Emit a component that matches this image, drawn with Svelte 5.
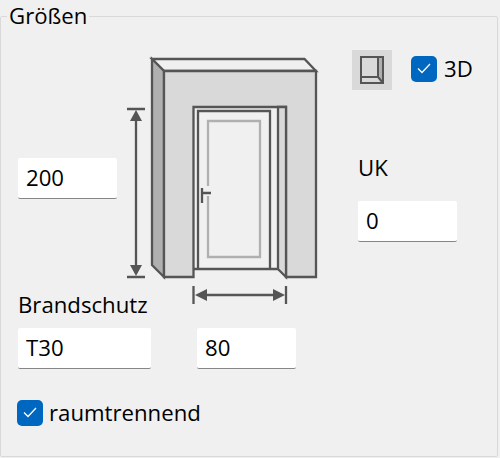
<script>
    let height = "200";
    let uk = "0";
    let fire = "T30";
    let width = "80";
    let is3d = true;
    let separating = true;
</script>

<div class="groupbox">
    <div class="legend">Größen</div>

    <div class="top">
        <div class="height-col">
            <input class="field w100" bind:value={height} />
        </div>

        <svg class="door" width="170" height="248" viewBox="150 57 170 248" fill="none" stroke="#555" stroke-width="2.300">
            <path d="M127 109H145M127 277H145M136 119V267" />
            <path d="M136 110L142 121H130ZM136 276L142 265H130Z" fill="#555" stroke="none" />
            <path d="M152 59H304.500L316 71H164Z" fill="#f0f0f0" />
            <path d="M152 59L164 71V277L152 265Z" fill="#b0b0b0" />
            <path d="M164 71H316V277H286V107H193.500V277H164Z" fill="#d9d9d9" />
            <path d="M278 107H286V277L278 269Z" fill="#d9d9d9" />
            <path d="M193.500 269H278" />
            <path d="M198 269V111H270V269" />
            <path d="M208 186V121H260V257H208V196" stroke="#b0b0b0" />
            <path d="M202 188V203M202 193H211" />
            <path d="M193.500 286V304M286 286V304M204 295H276" />
            <path d="M195 295L207 289V301ZM285 295L273 289V301Z" fill="#555" stroke="none" />
        </svg>

        <div class="side">
            <div class="view-row">
                <button class="view-btn" aria-label="Ansicht">
                    <svg width="24" height="28" viewBox="360 56 24 28" fill="none" stroke="#555" stroke-width="2">
                        <path d="M378 57H383V83L378 77Z" fill="#b0b0b0" stroke="none" />
                        <path d="M361 57H383V83H361ZM378 57V77H361M378 77L383 83" />
                    </svg>
                </button>
                <label class="check">
                    <input type="checkbox" bind:checked={is3d} />
                    <span class="box">
                        <svg width="14" height="11" viewBox="0 0 14 11" fill="none" stroke="#fff" stroke-width="1.300"><path d="M1 5.500L5 9.500L13 1" /></svg>
                    </span>
                    3D
                </label>
            </div>
            <div class="uk-group">
                <div class="label uk">UK</div>
                <input class="field w100" bind:value={uk} />
            </div>
        </div>
    </div>

    <div class="label">Brandschutz</div>
    <div class="bottom">
        <input class="field w134" bind:value={fire} />
        <input class="field w100" bind:value={width} />
    </div>

    <label class="check sep">
        <input type="checkbox" bind:checked={separating} />
        <span class="box">
            <svg width="14" height="11" viewBox="0 0 14 11" fill="none" stroke="#fff" stroke-width="1.300"><path d="M1 5.500L5 9.500L13 1" /></svg>
        </span>
        raumtrennend
    </label>
</div>

<style>
    :global(body) {
        background: #f0f0f0;
    }

    .groupbox {
        position: relative;
        box-sizing: border-box;
        width: 498px;
        height: 441px;
        margin: 16px 0 0 0;
        padding: 40px 0 0 17px;
        border: 1px solid #d9d9d9;
        border-radius: 2px;
        font-family: "Open Sans", "Noto Sans", sans-serif;
        font-size: 22.200px;
        color: #000;
    }

    .legend {
        position: absolute;
        top: -17px;
        left: 6px;
        padding: 0 2px;
        line-height: 32px;
        background: #f0f0f0;
    }

    .top {
        display: flex;
        height: 233px;
    }

    .height-col {
        width: 132px;
        padding-top: 101px;
    }

    .door {
        display: block;
        flex: none;
        overflow: visible;
    }

    .side {
        margin-left: 32px;
        margin-top: -7px;
        display: flex;
        flex-direction: column;
        align-items: flex-start;
    }

    .view-row {
        display: flex;
        align-items: flex-start;
        gap: 19px;
    }

    .view-btn {
        display: flex;
        align-items: center;
        justify-content: center;
        width: 40px;
        height: 40px;
        padding: 0;
        border: none;
        background: #d9d9d9;
    }

    .label {
        line-height: 30px;
    }

    .uk-group {
        margin-left: 6px;
    }

    .uk {
        margin-top: 63px;
        margin-bottom: 18px;
    }

    .bottom {
        display: flex;
        gap: 46px;
        margin-top: 8px;
    }

    .field {
        display: block;
        box-sizing: border-box;
        height: 41px;
        padding: 0 8px 2px;
        border: none;
        border-bottom: 1.500px solid #868686;
        border-radius: 2px;
        background: #fff;
        font: inherit;
        color: #000;
        outline: none;
    }

    .w100 {
        width: 99px;
    }

    .w134 {
        width: 133px;
    }

    .check {
        display: flex;
        align-items: center;
        gap: 7px;
    }

    .check input {
        display: none;
    }

    .box {
        display: flex;
        align-items: center;
        justify-content: center;
        width: 26px;
        height: 26px;
        border-radius: 5px;
        background: #0067c0;
    }

    .view-row .check {
        margin-top: 3px;
    }

    .sep {
        margin-top: 28px;
        margin-left: -1px;
        gap: 6px;
    }
</style>
